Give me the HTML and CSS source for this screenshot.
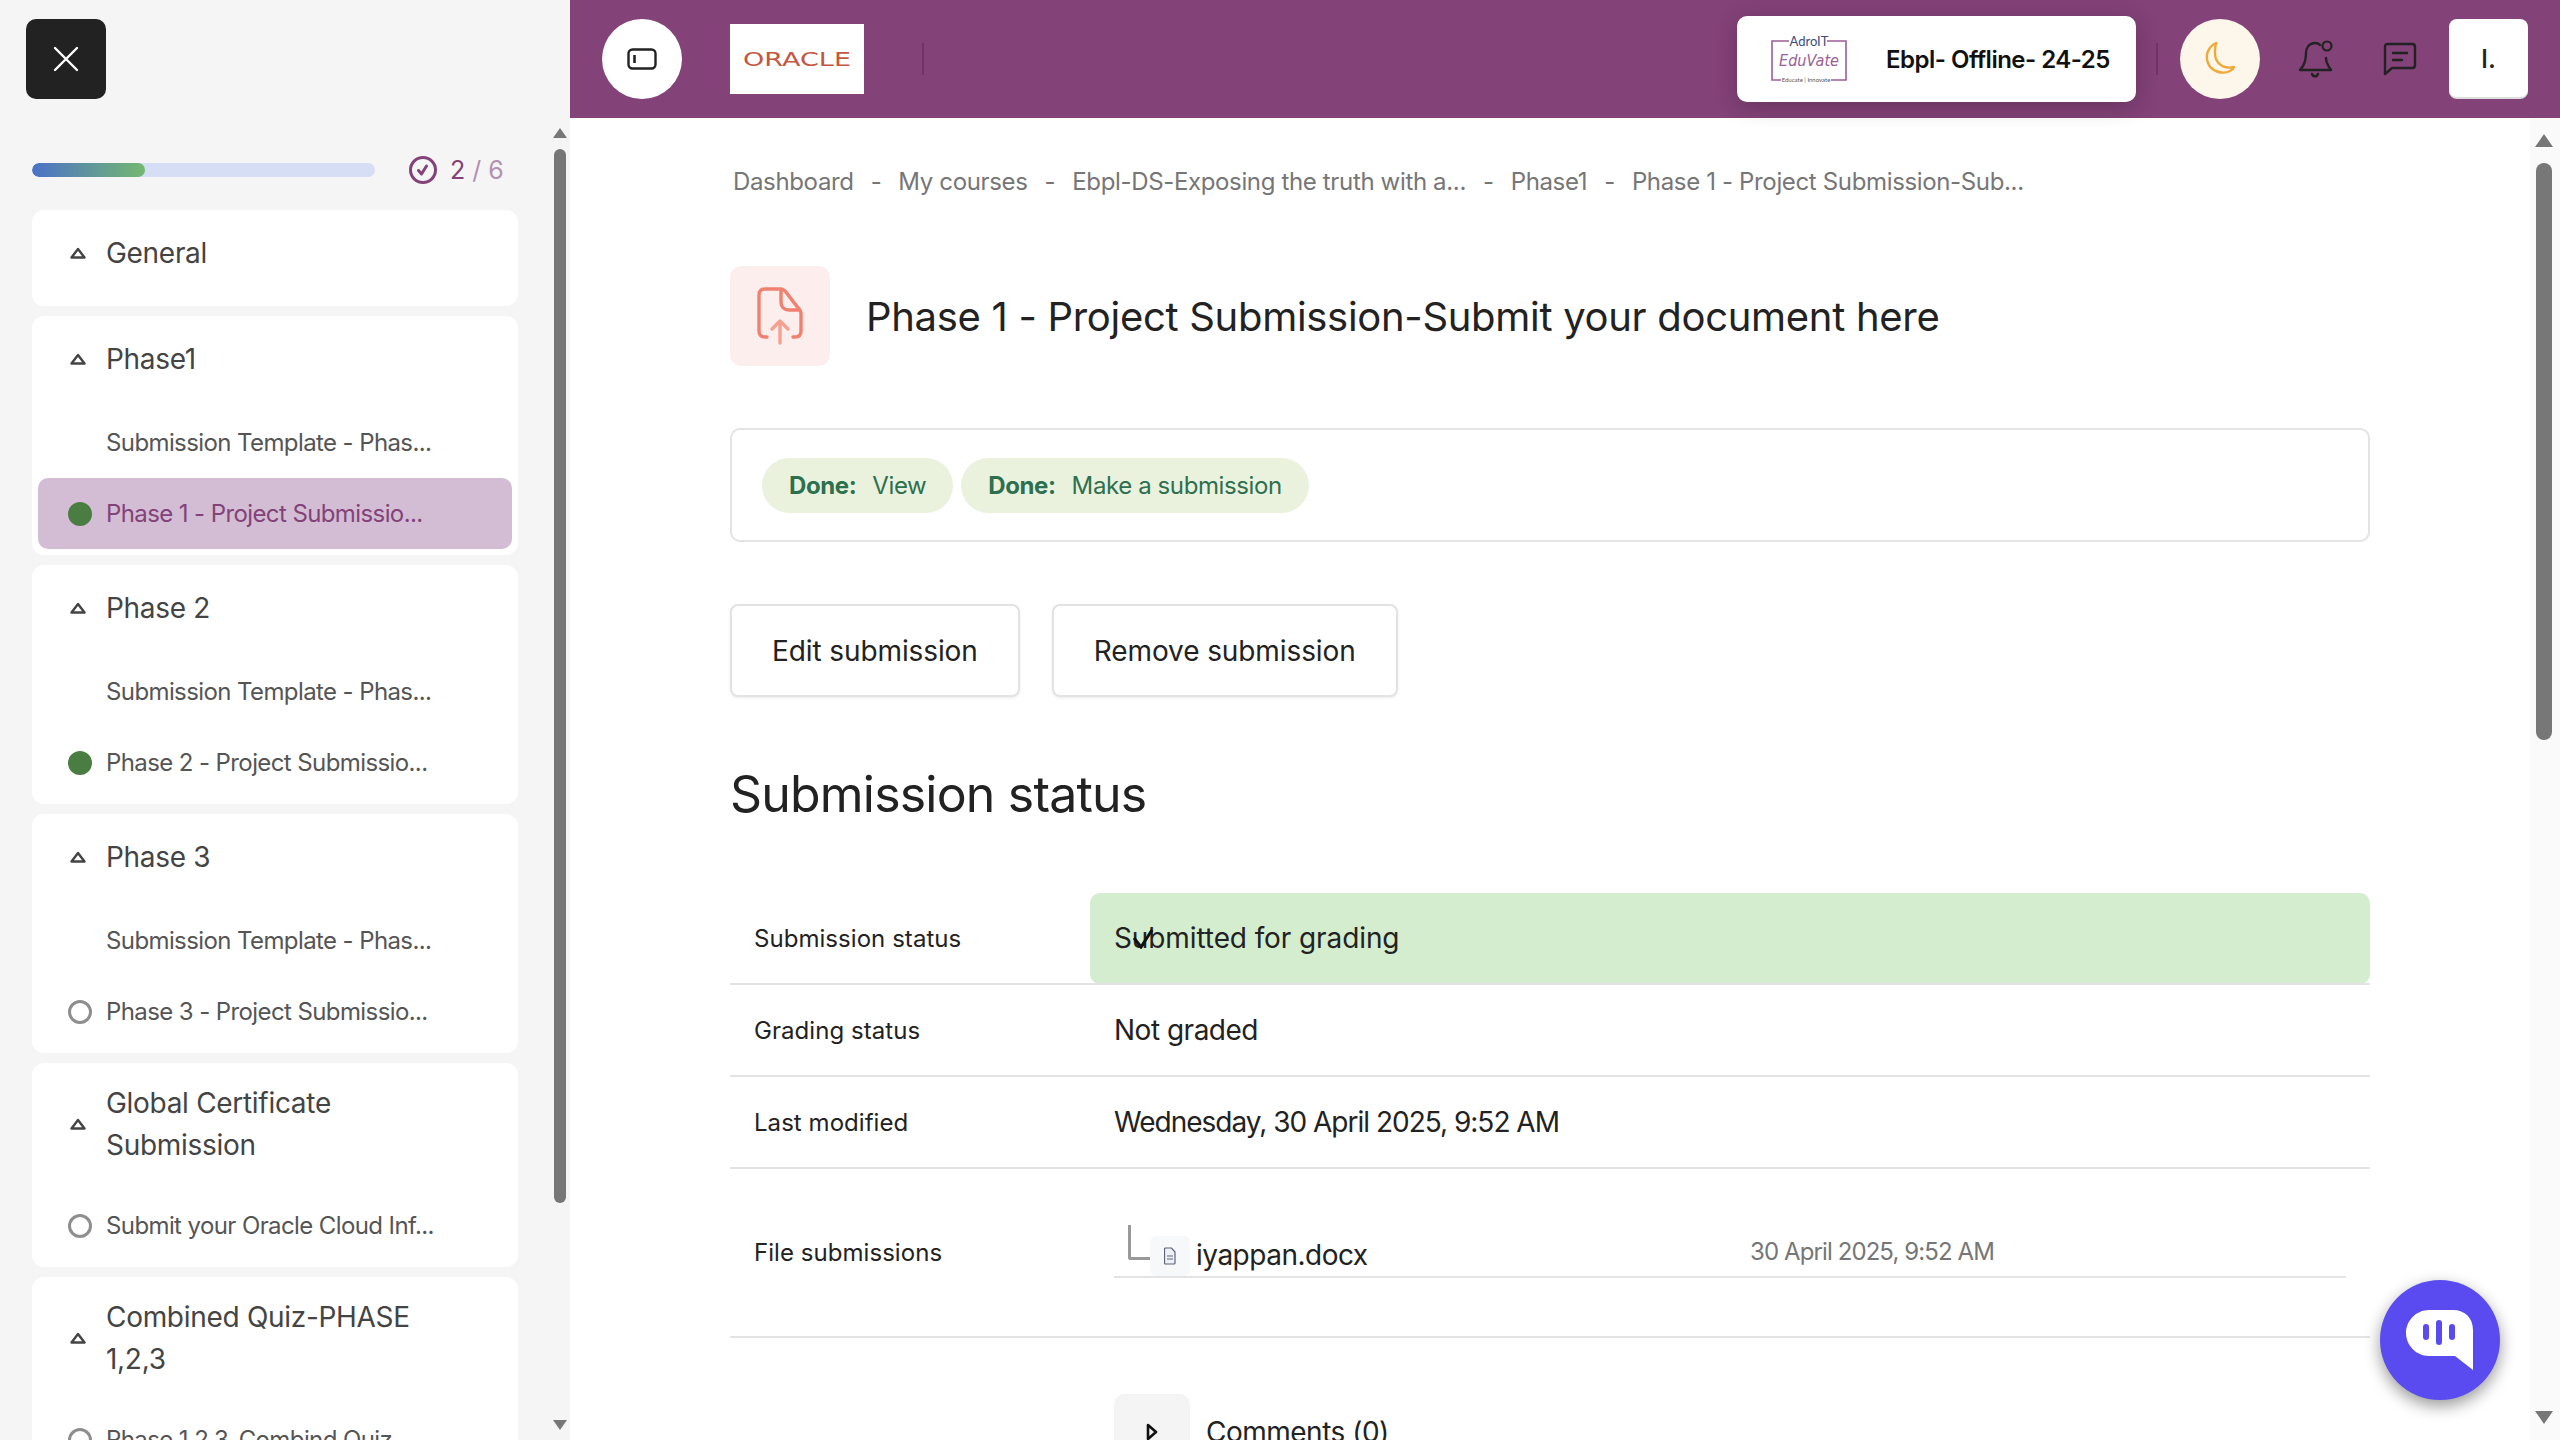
FILE: index.html
```html
<!DOCTYPE html>
<html lang="en">
  <head>
    <meta charset="UTF-8" />
    <title>Phase 1 - Project Submission</title>
    <link rel="stylesheet" href="styles.css">
  </head>
  <body>
    <aside class="sidebar">
      <button class="close-btn">
        <svg width="28" height="28" viewBox="0 0 28 28"><path d="M3 3L25 25M25 3L3 25" stroke="#fff" stroke-width="2.4" stroke-linecap="round"/></svg>
      </button>
      <div class="progress-row">
        <div class="progress"><div class="progress-fill" style="width: 33%"></div></div>
        <svg class="progress-check" width="28" height="28" viewBox="0 0 28 28"><circle cx="14" cy="14" r="12.5" fill="none" stroke="#834278" stroke-width="3"/><path d="M9.5 14.5l3 3.500 5-8" fill="none" stroke="#834278" stroke-width="3" stroke-linecap="round" stroke-linejoin="round"/></svg>
        <span class="progress-count">2 <span class="progress-total">/ 6</span></span>
      </div>

      <div class="sections">
        <section class="section section-empty">
          <div class="section-head">
            <svg class="caret" width="16" height="12" viewBox="0 0 16 12"><path d="M8 2L14.5 10.5H1.5Z" fill="none" stroke="#444" stroke-width="2.4" stroke-linejoin="round"/></svg>
            <span>General</span>
          </div>
        </section>

        <section class="section">
          <div class="section-head">
            <svg class="caret" width="16" height="12" viewBox="0 0 16 12"><path d="M8 2L14.5 10.5H1.5Z" fill="none" stroke="#444" stroke-width="2.4" stroke-linejoin="round"/></svg>
            <span>Phase1</span>
          </div>
          <ul class="items">
            <li class="item"><span class="dot dot-none"></span>Submission Template - Phas...</li>
            <li class="item item-active"><span class="dot dot-done"></span>Phase 1 - Project Submissio...</li>
          </ul>
        </section>

        <section class="section">
          <div class="section-head">
            <svg class="caret" width="16" height="12" viewBox="0 0 16 12"><path d="M8 2L14.5 10.5H1.5Z" fill="none" stroke="#444" stroke-width="2.4" stroke-linejoin="round"/></svg>
            <span>Phase 2</span>
          </div>
          <ul class="items">
            <li class="item"><span class="dot dot-none"></span>Submission Template - Phas...</li>
            <li class="item"><span class="dot dot-done"></span>Phase 2 - Project Submissio...</li>
          </ul>
        </section>

        <section class="section">
          <div class="section-head">
            <svg class="caret" width="16" height="12" viewBox="0 0 16 12"><path d="M8 2L14.5 10.5H1.5Z" fill="none" stroke="#444" stroke-width="2.4" stroke-linejoin="round"/></svg>
            <span>Phase 3</span>
          </div>
          <ul class="items">
            <li class="item"><span class="dot dot-none"></span>Submission Template - Phas...</li>
            <li class="item"><span class="dot dot-open"></span>Phase 3 - Project Submissio...</li>
          </ul>
        </section>

        <section class="section">
          <div class="section-head section-head-tall">
            <svg class="caret" width="16" height="12" viewBox="0 0 16 12"><path d="M8 2L14.5 10.5H1.5Z" fill="none" stroke="#444" stroke-width="2.4" stroke-linejoin="round"/></svg>
            <span>Global Certificate<br>Submission</span>
          </div>
          <ul class="items">
            <li class="item"><span class="dot dot-open"></span>Submit your Oracle Cloud Inf...</li>
          </ul>
        </section>

        <section class="section">
          <div class="section-head section-head-tall">
            <svg class="caret" width="16" height="12" viewBox="0 0 16 12"><path d="M8 2L14.5 10.5H1.5Z" fill="none" stroke="#444" stroke-width="2.4" stroke-linejoin="round"/></svg>
            <span>Combined Quiz-PHASE<br>1,2,3</span>
          </div>
          <ul class="items">
            <li class="item"><span class="dot dot-open"></span>Phase 1,2,3-Combind Quiz</li>
          </ul>
        </section>
      </div>

      <div class="bar-arrow bar-arrow-up side-up"></div>
      <div class="bar-thumb side-thumb"></div>
      <div class="bar-arrow bar-arrow-down side-down"></div>
    </aside>

    <div class="main">
      <header class="topbar">
        <button class="round-btn">
          <svg width="30" height="22" viewBox="0 0 30 22"><rect x="1.5" y="1.5" width="27" height="19" rx="4" fill="none" stroke="#222" stroke-width="2.4"/><path d="M7.5 7v8" stroke="#222" stroke-width="2.6"/></svg>
        </button>
        <div class="brand">
          <svg width="108" height="26" viewBox="0 0 108 26"><text x="0" y="20" textLength="108" lengthAdjust="spacingAndGlyphs" class="brand-text">ORACLE</text></svg>
        </div>
        <div class="bar-divider bar-divider-left"></div>

        <div class="tenant">
          <svg class="tenant-logo" width="76" height="54" viewBox="0 0 76 54">
            <path d="M18 9H1V48H10M60 48H75V9H56" fill="none" stroke="#9a5f96" stroke-width="1.6"/>
            <text x="38" y="14" text-anchor="middle" class="logo-top">AdroIT</text>
            <text x="38" y="34" text-anchor="middle" textLength="60" lengthAdjust="spacingAndGlyphs" class="logo-name">EduVate</text>
            <text x="35" y="50" text-anchor="middle" class="logo-tag">Educate | Innovate</text>
          </svg>
          <span class="tenant-name">Ebpl- Offline- 24-25</span>
        </div>
        <div class="bar-divider bar-divider-right"></div>

        <button class="round-btn moon-btn">
          <svg width="32" height="36" viewBox="0 0 32 36"><path d="M12 2C4 6 1 14 4 22c3 8 14 12 22 8 2-1 3.500-2 4-4-8 2-15-1-18-8-2-5-1-11 0-16Z" fill="none" stroke="#eea93a" stroke-width="2.4" stroke-linejoin="round"/></svg>
        </button>
        <svg class="bell" width="38" height="40" viewBox="0 0 38 40"><path d="M22 6c-1-1-3-2-5-2-6 0-9 5-9 10 0 8-2 13-6 17h31c-3-4-5-8-5-12" fill="none" stroke="#222" stroke-width="2.4" stroke-linejoin="round" stroke-linecap="round"/><circle cx="29" cy="7" r="4.500" fill="none" stroke="#222" stroke-width="2.2"/><path d="M14 35c1 3 5 3 6 0" fill="none" stroke="#222" stroke-width="2.4" stroke-linecap="round"/></svg>
        <svg class="chat" width="34" height="34" viewBox="0 0 34 34"><path d="M5 2h24c2 0 3 1 3 3v18c0 2-1 3-3 3H9l-7 6V5c0-2 1-3 3-3Z" fill="none" stroke="#222" stroke-width="2.400" stroke-linejoin="round"/><path d="M10 11h14M10 18h9" stroke="#222" stroke-width="2.400" stroke-linecap="round"/></svg>
        <button class="user-btn">I.</button>
      </header>

      <main class="content">
        <nav class="crumbs">
          <a>Dashboard</a><span>-</span>
          <a>My courses</a><span>-</span>
          <a>Ebpl-DS-Exposing the truth with a...</a><span>-</span>
          <a>Phase1</a><span>-</span>
          <a>Phase 1 - Project Submission-Sub...</a>
        </nav>

        <div class="page-head">
          <div class="page-icon">
            <svg width="46" height="58" viewBox="0 0 46 58"><path d="M10 50H8c-4 0-6-2-6-6V8c0-4 2-6 6-6h16c2 0 3 1 4 2l14 18c1 1 2 2 2 4v18c0 4-2 6-6 6h-2" fill="none" stroke="#f08070" stroke-width="3.400" stroke-linecap="round"/><path d="M24 3v12c0 5 3 8 8 8h11" fill="none" stroke="#f08070" stroke-width="3.400"/><path d="M23 56V34M15 42l8-8 8 8" fill="none" stroke="#f5a090" stroke-width="3.400" stroke-linecap="round" stroke-linejoin="round"/></svg>
          </div>
          <h1>Phase 1 - Project Submission-Submit your document here</h1>
        </div>

        <div class="completion">
          <span class="pill"><b>Done:</b>View</span>
          <span class="pill"><b>Done:</b>Make a submission</span>
        </div>

        <div class="actions">
          <button class="action-btn">Edit submission</button>
          <button class="action-btn">Remove submission</button>
        </div>

        <h2>Submission status</h2>

        <table class="status-table">
          <tr class="row-first">
            <th>Submission status</th>
            <td class="status-ok">
              Submitted for grading
              <svg class="status-tick" width="22" height="20" viewBox="0 0 22 20"><path d="M2 9l7 9L20 1" fill="none" stroke="#111" stroke-width="3"/></svg>
            </td>
          </tr>
          <tr class="row-short">
            <th>Grading status</th>
            <td>Not graded</td>
          </tr>
          <tr class="row-short">
            <th>Last modified</th>
            <td class="cell-date">Wednesday, 30 April 2025, 9:52 AM</td>
          </tr>
          <tr class="row-file">
            <th>File submissions</th>
            <td>
              <div class="file-line">
                <span class="tree-corner"></span>
                <span class="file-icon">
                  <svg width="12" height="18" viewBox="0 0 12 18"><path d="M1.500 1h6l3.500 4v11a1 1 0 0 1-1 1H1.500a1 1 0 0 1-1-1V2a1 1 0 0 1 1-1Z" fill="#eef0f5" stroke="#5b6478" stroke-width="1.200"/><path d="M3 9h6M3 12h6" stroke="#5b6478" stroke-width="1.200"/></svg>
                </span>
                <span class="file-name">iyappan.docx</span>
                <span class="file-date">30 April 2025, 9:52 AM</span>
              </div>
            </td>
          </tr>
        </table>

        <div class="comments">
          <span class="comments-toggle">
            <svg width="12" height="18" viewBox="0 0 12 18"><path d="M2 2l8 7-8 7Z" fill="none" stroke="#111" stroke-width="2.600" stroke-linejoin="round"/></svg>
          </span>
          <span>Comments (0)</span>
        </div>
      </main>

      <div class="bar-track"></div>
      <div class="bar-arrow bar-arrow-up main-up"></div>
      <div class="bar-thumb main-thumb"></div>
      <div class="bar-arrow bar-arrow-down main-down"></div>

      <button class="fab">
        <svg width="70" height="62" viewBox="0 0 70 62"><path d="M24 1h24c12 0 20 8 20 20v40L50 47H24C11 47 1 36 1 24S11 1 24 1Z" fill="#fff"/><rect x="18" y="15" width="6" height="16" rx="3" fill="#5a4bf0"/><rect x="31" y="11" width="6" height="25" rx="3" fill="#5a4bf0"/><rect x="44" y="15" width="6" height="16" rx="3" fill="#5a4bf0"/></svg>
      </button>
    </div>
  </body>
</html>
```

FILE: styles.css
```css
* {
  box-sizing: border-box;
}

html,
body {
  height: 100%;
}

body {
  margin: 0;
  display: flex;
  height: 1440px;
  overflow: hidden;
  font-family: Inter, 'Noto Sans', sans-serif;
  color: #1f1f1f;
  background: #fff;
}

button {
  font-family: inherit;
  border: none;
  padding: 0;
  cursor: pointer;
}

/* sidebar */

.sidebar {
  position: relative;
  flex: 0 0 570px;
  height: 1440px;
  overflow: hidden;
  background: #f5f5f5;
}

.close-btn {
  display: flex;
  align-items: center;
  justify-content: center;
  width: 80px;
  height: 80px;
  margin: 19px 0 0 26px;
  border-radius: 10px;
  background: #222;
}

.progress-row {
  display: flex;
  align-items: center;
  height: 28px;
  margin: 57px 0 26px 32px;
}

.progress {
  width: 343px;
  height: 14px;
  border-radius: 7px;
  background: #d6def5;
  overflow: hidden;
}

.progress-fill {
  height: 100%;
  border-radius: 7px;
  background: linear-gradient(90deg, #4a72c8, #74b870);
}

.progress-check {
  margin-left: 34px;
}

.progress-count {
  margin-left: 13px;
  font-size: 25px;
  color: #834278;
}

.progress-total {
  color: #b58fb0;
}

.sections {
  display: flex;
  flex-direction: column;
  gap: 10px;
  width: 486px;
  margin-left: 32px;
}

.section {
  border-radius: 12px;
  background: #fff;
  padding-bottom: 6px;
}

.section-empty {
  padding-bottom: 10px;
}

.section-head {
  display: flex;
  align-items: center;
  min-height: 86px;
  padding-left: 38px;
  font-size: 28px;
  line-height: 42px;
  letter-spacing: -0.3px;
  color: #444;
}

.section-head-tall {
  padding-top: 19px;
  padding-bottom: 19px;
}

.caret {
  flex: none;
  margin-right: 20px;
}

.items {
  list-style: none;
  margin: 5px 0 0;
  padding: 0 6px;
}

.item {
  display: flex;
  align-items: center;
  height: 71px;
  padding-left: 30px;
  border-radius: 10px;
  font-size: 24px;
  letter-spacing: -0.6px;
  color: #555;
}

.item-active {
  background: #d3bdd5;
  color: #834278;
}

.dot {
  flex: none;
  width: 24px;
  height: 24px;
  margin-right: 14px;
  border-radius: 50%;
}

.dot-done {
  background: #4a7d42;
}

.dot-open {
  border: 3px solid #8e8e8e;
}

/* scroll bars */

.bar-thumb {
  position: absolute;
  width: 12px;
  border-radius: 6px;
  background: #777;
}

.bar-arrow {
  position: absolute;
  width: 0;
  height: 0;
  border-left: 7px solid transparent;
  border-right: 7px solid transparent;
}

.bar-arrow-up {
  border-bottom: 10px solid #777;
}

.bar-arrow-down {
  border-top: 10px solid #777;
}

.side-thumb {
  left: 554px;
  top: 149px;
  height: 1054px;
}

.side-up {
  left: 553px;
  top: 128px;
}

.side-down {
  left: 553px;
  top: 1420px;
}

.bar-track {
  position: absolute;
  right: 0;
  top: 118px;
  bottom: 0;
  width: 30px;
  background: #fafafa;
}

.main-thumb {
  right: 8px;
  top: 163px;
  width: 16px;
  height: 577px;
  border-radius: 8px;
}

.main-up {
  right: 7px;
  top: 134px;
  border-left-width: 9px;
  border-right-width: 9px;
  border-bottom-width: 13px;
}

.main-down {
  right: 7px;
  top: 1411px;
  border-left-width: 9px;
  border-right-width: 9px;
  border-top-width: 13px;
}

/* top bar */

.main {
  position: relative;
  flex: 1;
  min-width: 0;
  height: 1440px;
  overflow: hidden;
}

.topbar {
  display: flex;
  align-items: center;
  height: 118px;
  padding-left: 32px;
  background: #834278;
}

.round-btn {
  display: flex;
  align-items: center;
  justify-content: center;
  flex: none;
  width: 80px;
  height: 80px;
  border-radius: 50%;
  background: #fff;
}

.brand {
  display: flex;
  align-items: center;
  justify-content: center;
  width: 134px;
  height: 70px;
  margin-left: 48px;
  background: #fff;
}

.brand-text {
  font-family: 'DejaVu Sans', sans-serif;
  font-size: 19px;
  fill: #c4573f;
}

.bar-divider {
  width: 2px;
  height: 32px;
  background: #6f3566;
}

.bar-divider-left {
  margin-left: 58px;
}

.bar-divider-right {
  margin-left: 20px;
}

.tenant {
  position: relative;
  z-index: 2;
  display: flex;
  align-items: center;
  width: 399px;
  height: 86px;
  margin-left: auto;
  padding-left: 34px;
  border-radius: 10px;
  background: #fff;
  box-shadow: 0 5px 22px rgba(0, 0, 0, 0.22);
}

.tenant-logo {
  flex: none;
}

.logo-top {
  font-family: Lato, sans-serif;
  font-size: 13px;
  fill: #3c4c7c;
}

.logo-name {
  font-family: 'DejaVu Sans', sans-serif;
  font-size: 16px;
  font-style: italic;
  fill: #9a5f96;
}

.logo-tag {
  font-family: Lato, sans-serif;
  font-size: 6px;
  fill: #555;
}

.tenant-name {
  margin-left: 39px;
  font-size: 24px;
  font-weight: 600;
  letter-spacing: -0.5px;
  color: #111;
  white-space: nowrap;
}

.moon-btn {
  margin-left: 22px;
  background: #fdf6ea;
}

.bell {
  flex: none;
  margin-left: 38px;
}

.chat {
  flex: none;
  margin-left: 47px;
}

.user-btn {
  flex: none;
  width: 79px;
  height: 80px;
  margin-left: 32px;
  margin-right: 32px;
  border-radius: 8px;
  border-bottom: 2px solid #ddd;
  background: #fff;
  font-size: 26px;
  font-weight: 500;
  color: #222;
}

/* page content */

.content {
  padding: 46px 190px 0 160px;
}

.crumbs {
  display: flex;
  align-items: center;
  gap: 17px;
  height: 34px;
  padding-left: 3px;
  font-size: 24px;
  letter-spacing: -0.35px;
  color: #767676;
  white-space: nowrap;
}

.page-head {
  display: flex;
  align-items: center;
  margin-top: 68px;
}

.page-icon {
  display: flex;
  align-items: center;
  justify-content: center;
  flex: none;
  width: 100px;
  height: 100px;
  border-radius: 12px;
  background: #fceeec;
}

h1 {
  margin: 0 0 0 36px;
  font-size: 40px;
  font-weight: 400;
  letter-spacing: -0.3px;
  color: #222;
}

.completion {
  display: flex;
  gap: 8px;
  height: 114px;
  margin-top: 62px;
  padding: 28px 30px;
  border: 2px solid #e3e3e3;
  border-radius: 10px;
}

.pill {
  display: flex;
  align-items: center;
  height: 55px;
  padding: 0 27px;
  border-radius: 28px;
  background: #eaf2de;
  font-size: 24px;
  letter-spacing: -0.4px;
  color: #2d7050;
}

.pill b {
  margin-right: 16px;
  font-weight: 700;
}

.actions {
  display: flex;
  gap: 32px;
  margin-top: 62px;
}

.action-btn {
  height: 93px;
  padding: 0 40px;
  border: 2px solid #e3e3e3;
  border-radius: 8px;
  background: #fff;
  box-shadow: 0 1px 3px rgba(0, 0, 0, 0.08);
  font-size: 28px;
  font-weight: 400;
  letter-spacing: -0.1px;
  color: #222;
}

h2 {
  margin: 62px 0 0;
  font-size: 50px;
  line-height: 70px;
  font-weight: 400;
  letter-spacing: -0.8px;
  color: #222;
}

.status-table {
  width: 100%;
  margin-top: 64px;
  border-collapse: collapse;
}

.status-table tr {
  border-bottom: 2px solid #e3e3e3;
}

.status-table th {
  width: 360px;
  padding: 0 0 0 24px;
  text-align: left;
  font-size: 24px;
  font-weight: 400;
  letter-spacing: 0.05px;
  color: #222;
}

.status-table td {
  position: relative;
  padding: 0 24px;
  font-size: 28px;
  letter-spacing: -0.5px;
  color: #222;
}

.row-first {
  height: 91px;
}

.row-short {
  height: 92px;
}

.row-file {
  height: 169px;
}

.status-table .status-ok {
  background: #d4edcf;
  border-radius: 10px;
  letter-spacing: -0.1px;
}

.status-table .cell-date {
  letter-spacing: -1px;
}

.status-tick {
  position: absolute;
  left: 42px;
  top: 36px;
}

.file-line {
  display: flex;
  align-items: center;
  height: 50px;
  padding-left: 36px;
  border-bottom: 2px solid #e3e3e3;
}

.tree-corner {
  flex: none;
  width: 22px;
  height: 35px;
  align-self: flex-start;
  margin-top: -3px;
  margin-left: -22px;
  border-left: 3px solid #999;
  border-bottom: 3px solid #999;
  border-radius: 0 0 0 3px;
}

.file-icon {
  display: flex;
  align-items: center;
  justify-content: center;
  flex: none;
  align-self: flex-end;
  width: 40px;
  height: 40px;
  border-radius: 6px;
  background: #f7f8fa;
}

.file-name {
  margin-left: 6px;
  padding-top: 6px;
  font-size: 28px;
}

.file-date {
  margin-left: auto;
  margin-right: 352px;
  font-size: 24px;
  letter-spacing: -0.9px;
  color: #767676;
}

.comments {
  display: flex;
  align-items: center;
  gap: 16px;
  margin-top: 56px;
  margin-left: 384px;
  font-size: 28px;
  letter-spacing: -0.5px;
  color: #222;
}

.comments-toggle {
  display: flex;
  align-items: center;
  justify-content: center;
  width: 76px;
  height: 76px;
  border-radius: 10px;
  background: #f4f4f4;
}

.fab {
  position: absolute;
  left: 1810px;
  top: 1280px;
  display: flex;
  align-items: center;
  justify-content: center;
  width: 120px;
  height: 120px;
  border-radius: 50%;
  background: #5a4bf0;
  box-shadow: 0 6px 16px rgba(0, 0, 0, 0.4);
}
```
